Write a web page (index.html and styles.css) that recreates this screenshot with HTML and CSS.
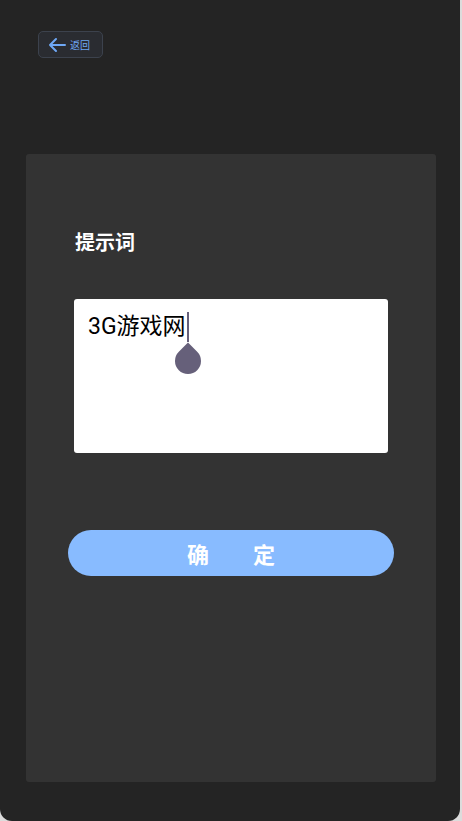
FILE: index.html
```html
<!DOCTYPE html>
<html lang="zh">
<head>
<meta charset="utf-8">
<link rel="stylesheet" href="styles.css">
</head>
<body>
<div class="screen">
  <div class="topbar">
    <button class="back">
      <svg class="back-icon" width="18" height="16" viewBox="0 0 18 16">
        <path d="M17 8 H2 M8 2 L2 8 L8 14" fill="none" stroke="#6fa8f5" stroke-width="2" stroke-linecap="round" stroke-linejoin="round"/>
      </svg>
      <span class="back-text">返回</span>
    </button>
  </div>
  <div class="panel">
    <div class="title">提示词</div>
    <div class="input">
      <span class="input-text">3G游戏网</span><span class="caret"><span class="caret-line"></span><span class="handle"></span></span>
    </div>
    <button class="confirm">确　　定</button>
  </div>
</div>
</body>
</html>
```
FILE: styles.css
```css
html, body {
  margin: 0;
  padding: 0;
}
body {
  background: #dcdcdc;
  width: 462px;
  height: 821px;
  overflow: hidden;
  font-family: "Roboto", "Noto Sans CJK SC", sans-serif;
}
.screen {
  width: 460px;
  height: 821px;
  background: #242424;
  border-radius: 0 0 12px 12px;
  display: flex;
  flex-direction: column;
}
.topbar {
  padding: 31px 0 0 38px;
  height: 154px;
  box-sizing: border-box;
  flex-shrink: 0;
}
.back {
  width: 65px;
  height: 27px;
  box-sizing: border-box;
  border: 1px solid #3c424d;
  background: #2a2c31;
  border-radius: 5px;
  display: flex;
  align-items: center;
  padding: 0 0 0 9px;
  gap: 4px;
  margin: 0;
}
.back-icon {
  display: block;
}
.back-text {
  color: #6fa8f5;
  font-size: 10px;
  line-height: 12px;
  font-family: "Noto Sans CJK SC", sans-serif;
}
.panel {
  margin-left: 26px;
  width: 410px;
  height: 628px;
  flex-shrink: 0;
  background: #333333;
  border-radius: 3px;
  box-sizing: border-box;
  padding: 78px 0 0 48px;
  display: flex;
  flex-direction: column;
  align-items: flex-start;
}
.title {
  color: #ffffff;
  font-size: 20px;
  font-weight: bold;
  line-height: 20px;
  margin-left: 1px;
  font-family: "Noto Sans CJK SC", sans-serif;
}
.input {
  margin-top: 47px;
  width: 314px;
  height: 154px;
  background: #ffffff;
  border-radius: 3px;
  box-sizing: border-box;
  padding: 13px 0 0 14px;
  display: flex;
  align-items: flex-start;
}
.input-text {
  color: #000000;
  font-size: 23px;
  line-height: 30px;
}
.caret {
  position: relative;
  width: 2px;
  height: 30px;
  margin-left: 1px;
}
.caret-line {
  display: block;
  width: 2px;
  height: 30px;
  background: #66607a;
}
.handle {
  position: absolute;
  left: -12px;
  top: 36px;
  width: 26px;
  height: 26px;
  background: #66607a;
  border-radius: 0 50% 50% 50%;
  transform: rotate(45deg);
}
.confirm {
  margin: 77px 0 0 -6px;
  width: 326px;
  height: 46px;
  border: none;
  border-radius: 23px;
  background: #88bbff;
  color: #ffffff;
  font-size: 22px;
  font-weight: bold;
  font-family: "Noto Sans CJK SC", sans-serif;
  padding: 0;
}
```
